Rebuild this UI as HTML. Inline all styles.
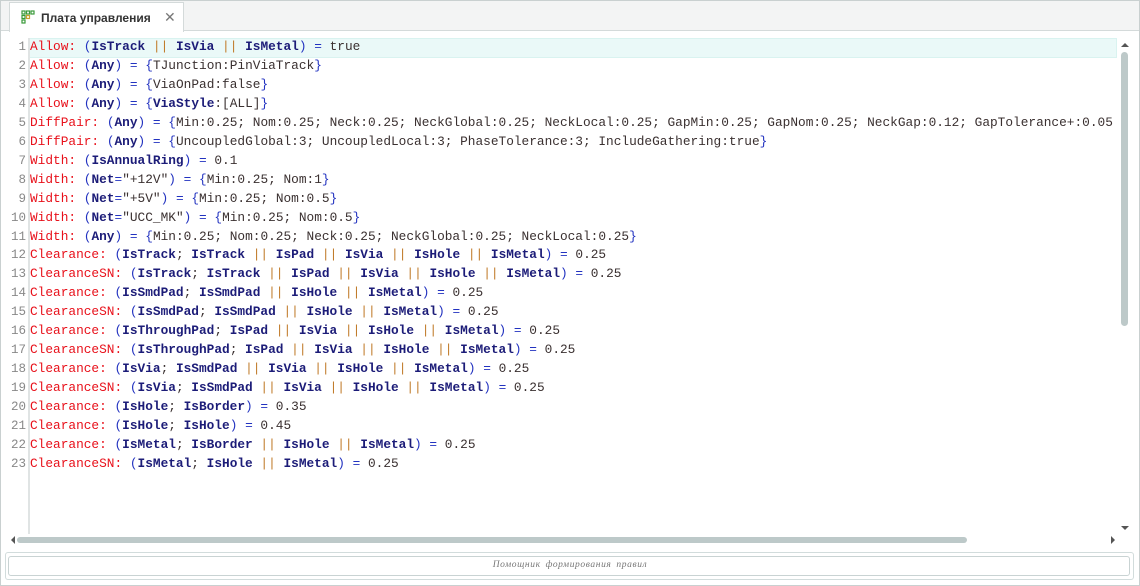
<!DOCTYPE html>
<html><head><meta charset="utf-8"><style>
*{margin:0;padding:0;box-sizing:border-box}
body{width:1140px;height:586px;background:#fff;overflow:hidden;position:relative;font-family:"Liberation Sans",sans-serif}
.frame{position:absolute;left:0;top:0;width:1140px;height:586px;border:1px solid #c9d0d0}
.tabbar{position:absolute;left:1px;top:1px;width:1138px;height:30px;background:#f3f4f4;border-bottom:1px solid #d4dada}
.tab{position:absolute;left:8px;top:1px;width:175px;height:30px;background:#fff;border:1px solid #d4dada;border-bottom:none}
.tab .t{position:absolute;left:31px;top:8px;font-size:12px;font-weight:bold;color:#333}
.tab .x{position:absolute;left:154px;top:6px;font-size:14px;color:#777;font-weight:normal}
.code{position:absolute;left:0;top:38px;font-family:"Liberation Mono",monospace;font-size:12.8px;line-height:18.95px;white-space:pre}
.ln{position:absolute;left:0;width:26px;text-align:right;color:#888;font-size:12.5px}
.tx{position:absolute;left:30px;color:#3a3030}
.k{color:#e8101a}.p{color:#2232c0}.i{color:#1c1c78;font-weight:bold}.o{color:#c07a28}
.gut{position:absolute;left:28px;top:38px;width:2px;height:496px;background:#e0e4e4}
.hl{position:absolute;left:29px;top:38px;width:1088px;height:20px;background:#eaf9f8;border:1px solid #d9f3f0}
.vs{position:absolute;left:1121px;top:52px;width:7px;height:274px;background:#bdc9c9;border-radius:4px}
.hs{position:absolute;left:17px;top:537px;width:950px;height:6px;background:#bdc9c9;border-radius:3px}
.tri{position:absolute;width:0;height:0}
.btn{position:absolute;left:5px;top:552px;width:1129px;height:28px;border:1px solid #d2dcdc;border-radius:3px}
.btn2{position:absolute;left:8px;top:556px;width:1122px;height:20px;border:1px solid #c9d3d3;border-radius:3px}
.bt{position:absolute;left:0;width:1140px;top:560px;text-align:center;font-family:"Liberation Serif",serif;font-style:italic;font-size:9.5px;color:#777;letter-spacing:.6px;word-spacing:2px}
</style></head><body>
<div class="frame"></div>
<div class="tabbar"><div class="tab">
<svg style="position:absolute;left:11px;top:7px" width="14" height="14" viewBox="0 0 14 14"><g fill="none" stroke="#3a9a3a" stroke-width="1.2"><rect x="1" y="1" width="3" height="3"/><rect x="5.5" y="1" width="3" height="3"/><rect x="10" y="1" width="3" height="3"/><rect x="1" y="5.5" width="3" height="3"/><rect x="1" y="10" width="3" height="3"/><rect x="5.5" y="5.5" width="3" height="3" stroke="#c9a030"/></g></svg>
<span class="t">Плата управления</span><span class="x">✕</span></div></div>
<div class="hl"></div>
<div class="gut"></div>
<div class="code">
<div class="ln" style="top:0">1</div><div class="tx" style="top:0"><span class="k">Allow:</span> <span class="p">(</span><span class="i">IsTrack</span> <span class="o">||</span> <span class="i">IsVia</span> <span class="o">||</span> <span class="i">IsMetal</span><span class="p">)</span> <span class="p">=</span> true</div>
<div class="ln" style="top:18.95px">2</div><div class="tx" style="top:18.95px"><span class="k">Allow:</span> <span class="p">(</span><span class="i">Any</span><span class="p">)</span> <span class="p">=</span> <span class="p">{</span>TJunction:PinViaTrack<span class="p">}</span></div>
<div class="ln" style="top:37.9px">3</div><div class="tx" style="top:37.9px"><span class="k">Allow:</span> <span class="p">(</span><span class="i">Any</span><span class="p">)</span> <span class="p">=</span> <span class="p">{</span>ViaOnPad:false<span class="p">}</span></div>
<div class="ln" style="top:56.85px">4</div><div class="tx" style="top:56.85px"><span class="k">Allow:</span> <span class="p">(</span><span class="i">Any</span><span class="p">)</span> <span class="p">=</span> <span class="p">{</span><span class="i">ViaStyle</span>:[ALL]<span class="p">}</span></div>
<div class="ln" style="top:75.8px">5</div><div class="tx" style="top:75.8px"><span class="k">DiffPair:</span> <span class="p">(</span><span class="i">Any</span><span class="p">)</span> <span class="p">=</span> <span class="p">{</span>Min:0.25; Nom:0.25; Neck:0.25; NeckGlobal:0.25; NeckLocal:0.25; GapMin:0.25; GapNom:0.25; NeckGap:0.12; GapTolerance+:0.05</div>
<div class="ln" style="top:94.75px">6</div><div class="tx" style="top:94.75px"><span class="k">DiffPair:</span> <span class="p">(</span><span class="i">Any</span><span class="p">)</span> <span class="p">=</span> <span class="p">{</span>UncoupledGlobal:3; UncoupledLocal:3; PhaseTolerance:3; IncludeGathering:true<span class="p">}</span></div>
<div class="ln" style="top:113.7px">7</div><div class="tx" style="top:113.7px"><span class="k">Width:</span> <span class="p">(</span><span class="i">IsAnnualRing</span><span class="p">)</span> <span class="p">=</span> 0.1</div>
<div class="ln" style="top:132.65px">8</div><div class="tx" style="top:132.65px"><span class="k">Width:</span> <span class="p">(</span><span class="i">Net</span><span class="p">=</span>"+12V"<span class="p">)</span> <span class="p">=</span> <span class="p">{</span>Min:0.25; Nom:1<span class="p">}</span></div>
<div class="ln" style="top:151.6px">9</div><div class="tx" style="top:151.6px"><span class="k">Width:</span> <span class="p">(</span><span class="i">Net</span><span class="p">=</span>"+5V"<span class="p">)</span> <span class="p">=</span> <span class="p">{</span>Min:0.25; Nom:0.5<span class="p">}</span></div>
<div class="ln" style="top:170.55px">10</div><div class="tx" style="top:170.55px"><span class="k">Width:</span> <span class="p">(</span><span class="i">Net</span><span class="p">=</span>"UCC_MK"<span class="p">)</span> <span class="p">=</span> <span class="p">{</span>Min:0.25; Nom:0.5<span class="p">}</span></div>
<div class="ln" style="top:189.5px">11</div><div class="tx" style="top:189.5px"><span class="k">Width:</span> <span class="p">(</span><span class="i">Any</span><span class="p">)</span> <span class="p">=</span> <span class="p">{</span>Min:0.25; Nom:0.25; Neck:0.25; NeckGlobal:0.25; NeckLocal:0.25<span class="p">}</span></div>
<div class="ln" style="top:208.45px">12</div><div class="tx" style="top:208.45px"><span class="k">Clearance:</span> <span class="p">(</span><span class="i">IsTrack</span>; <span class="i">IsTrack</span> <span class="o">||</span> <span class="i">IsPad</span> <span class="o">||</span> <span class="i">IsVia</span> <span class="o">||</span> <span class="i">IsHole</span> <span class="o">||</span> <span class="i">IsMetal</span><span class="p">)</span> <span class="p">=</span> 0.25</div>
<div class="ln" style="top:227.4px">13</div><div class="tx" style="top:227.4px"><span class="k">ClearanceSN:</span> <span class="p">(</span><span class="i">IsTrack</span>; <span class="i">IsTrack</span> <span class="o">||</span> <span class="i">IsPad</span> <span class="o">||</span> <span class="i">IsVia</span> <span class="o">||</span> <span class="i">IsHole</span> <span class="o">||</span> <span class="i">IsMetal</span><span class="p">)</span> <span class="p">=</span> 0.25</div>
<div class="ln" style="top:246.35px">14</div><div class="tx" style="top:246.35px"><span class="k">Clearance:</span> <span class="p">(</span><span class="i">IsSmdPad</span>; <span class="i">IsSmdPad</span> <span class="o">||</span> <span class="i">IsHole</span> <span class="o">||</span> <span class="i">IsMetal</span><span class="p">)</span> <span class="p">=</span> 0.25</div>
<div class="ln" style="top:265.3px">15</div><div class="tx" style="top:265.3px"><span class="k">ClearanceSN:</span> <span class="p">(</span><span class="i">IsSmdPad</span>; <span class="i">IsSmdPad</span> <span class="o">||</span> <span class="i">IsHole</span> <span class="o">||</span> <span class="i">IsMetal</span><span class="p">)</span> <span class="p">=</span> 0.25</div>
<div class="ln" style="top:284.25px">16</div><div class="tx" style="top:284.25px"><span class="k">Clearance:</span> <span class="p">(</span><span class="i">IsThroughPad</span>; <span class="i">IsPad</span> <span class="o">||</span> <span class="i">IsVia</span> <span class="o">||</span> <span class="i">IsHole</span> <span class="o">||</span> <span class="i">IsMetal</span><span class="p">)</span> <span class="p">=</span> 0.25</div>
<div class="ln" style="top:303.2px">17</div><div class="tx" style="top:303.2px"><span class="k">ClearanceSN:</span> <span class="p">(</span><span class="i">IsThroughPad</span>; <span class="i">IsPad</span> <span class="o">||</span> <span class="i">IsVia</span> <span class="o">||</span> <span class="i">IsHole</span> <span class="o">||</span> <span class="i">IsMetal</span><span class="p">)</span> <span class="p">=</span> 0.25</div>
<div class="ln" style="top:322.15px">18</div><div class="tx" style="top:322.15px"><span class="k">Clearance:</span> <span class="p">(</span><span class="i">IsVia</span>; <span class="i">IsSmdPad</span> <span class="o">||</span> <span class="i">IsVia</span> <span class="o">||</span> <span class="i">IsHole</span> <span class="o">||</span> <span class="i">IsMetal</span><span class="p">)</span> <span class="p">=</span> 0.25</div>
<div class="ln" style="top:341.1px">19</div><div class="tx" style="top:341.1px"><span class="k">ClearanceSN:</span> <span class="p">(</span><span class="i">IsVia</span>; <span class="i">IsSmdPad</span> <span class="o">||</span> <span class="i">IsVia</span> <span class="o">||</span> <span class="i">IsHole</span> <span class="o">||</span> <span class="i">IsMetal</span><span class="p">)</span> <span class="p">=</span> 0.25</div>
<div class="ln" style="top:360.05px">20</div><div class="tx" style="top:360.05px"><span class="k">Clearance:</span> <span class="p">(</span><span class="i">IsHole</span>; <span class="i">IsBorder</span><span class="p">)</span> <span class="p">=</span> 0.35</div>
<div class="ln" style="top:379px">21</div><div class="tx" style="top:379px"><span class="k">Clearance:</span> <span class="p">(</span><span class="i">IsHole</span>; <span class="i">IsHole</span><span class="p">)</span> <span class="p">=</span> 0.45</div>
<div class="ln" style="top:397.95px">22</div><div class="tx" style="top:397.95px"><span class="k">Clearance:</span> <span class="p">(</span><span class="i">IsMetal</span>; <span class="i">IsBorder</span> <span class="o">||</span> <span class="i">IsHole</span> <span class="o">||</span> <span class="i">IsMetal</span><span class="p">)</span> <span class="p">=</span> 0.25</div>
<div class="ln" style="top:416.9px">23</div><div class="tx" style="top:416.9px"><span class="k">ClearanceSN:</span> <span class="p">(</span><span class="i">IsMetal</span>; <span class="i">IsHole</span> <span class="o">||</span> <span class="i">IsMetal</span><span class="p">)</span> <span class="p">=</span> 0.25</div>
</div>
<div style="position:absolute;left:1117px;top:38px;width:22px;height:500px;background:#fff"></div>
<div class="vs"></div>
<div class="tri" style="left:1121px;top:43px;border-left:4px solid transparent;border-right:4px solid transparent;border-bottom:4px solid #555"></div>
<div class="tri" style="left:1121px;top:526px;border-left:4px solid transparent;border-right:4px solid transparent;border-top:4px solid #555"></div>
<div class="hs"></div>
<div class="tri" style="left:11px;top:536px;border-top:4px solid transparent;border-bottom:4px solid transparent;border-right:4px solid #555"></div>
<div class="tri" style="left:1111px;top:536px;border-top:4px solid transparent;border-bottom:4px solid transparent;border-left:4px solid #555"></div>
<div class="btn"></div><div class="btn2"></div>
<div class="bt">Помощник формирования правил</div>
</body></html>
